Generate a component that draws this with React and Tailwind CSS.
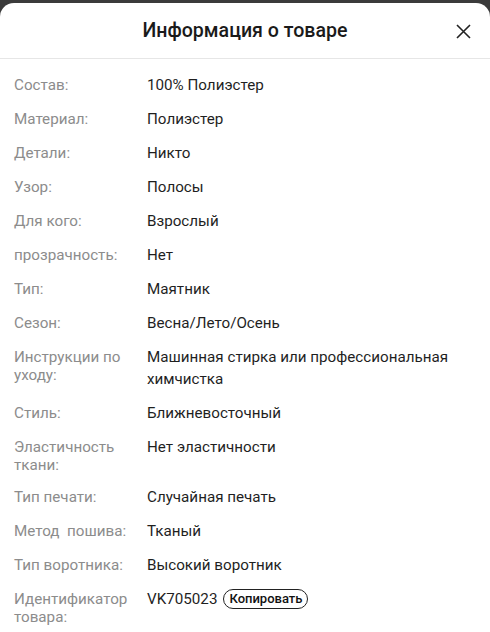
import React from "react";

const rows = [
  ["Состав:", "100% Полиэстер"],
  ["Материал:", "Полиэстер"],
  ["Детали:", "Никто"],
  ["Узор:", "Полосы"],
  ["Для кого:", "Взрослый"],
  ["прозрачность:", "Нет"],
  ["Тип:", "Маятник"],
  ["Сезон:", "Весна/Лето/Осень"],
  ["Инструкции по уходу:", "Машинная стирка или профессиональная химчистка"],
  ["Стиль:", "Ближневосточный"],
  ["Эластичность ткани:", "Нет эластичности"],
  ["Тип печати:", "Случайная печать"],
  ["Метод  пошива:", "Тканый"],
  ["Тип воротника:", "Высокий воротник"],
];

export default function App() {
  return (
    <div
      className="w-[490px] h-[632px] bg-[#3b3b3b] pt-[3px] overflow-hidden"
      style={{ fontFamily: "Roboto, 'Noto Sans', sans-serif" }}
    >
      <div className="bg-white rounded-t-[14px] h-full">
        <div className="relative h-[56px] flex items-center justify-center border-b border-[#e6e6e6]">
          <span className="text-[19.6px] font-medium text-[#1a1a1a]">Информация о товаре</span>
          <button className="absolute right-[19px] top-[21px] w-[15px] h-[15px]">
            <svg viewBox="0 0 15 15" width="15" height="15">
              <path d="M1 1 L14 14 M14 1 L1 14" stroke="#222" strokeWidth="1.6" fill="none" />
            </svg>
          </button>
        </div>
        <div className="flex flex-col gap-3 pt-[15px] pl-[14px] pr-[14px]">
          {rows.map(([label, value]) => (
            <div key={label} className="flex items-start">
              <div className="w-[133px] shrink-0 pr-3 mt-[2px] text-[15.2px] leading-[18px] text-[#8c8c8c] whitespace-pre-wrap">
                {label}
              </div>
              <div className="flex-1 text-[15.2px] leading-[22px] text-[#1f1f1f]">{value}</div>
            </div>
          ))}
          <div className="flex items-start">
            <div className="w-[133px] shrink-0 pr-3 mt-[2px] text-[15.2px] leading-[18px] text-[#8c8c8c]">
              Идентификатор товара:
            </div>
            <div className="flex-1 flex items-center text-[15.2px] leading-[22px] text-[#1f1f1f]">
              <span>VK705023</span>
              <span className="ml-[6px] border border-[#222] rounded-full px-[5px] text-[13px] leading-[18px] font-medium text-[#111]">
                Копировать
              </span>
            </div>
          </div>
        </div>
      </div>
    </div>
  );
}
